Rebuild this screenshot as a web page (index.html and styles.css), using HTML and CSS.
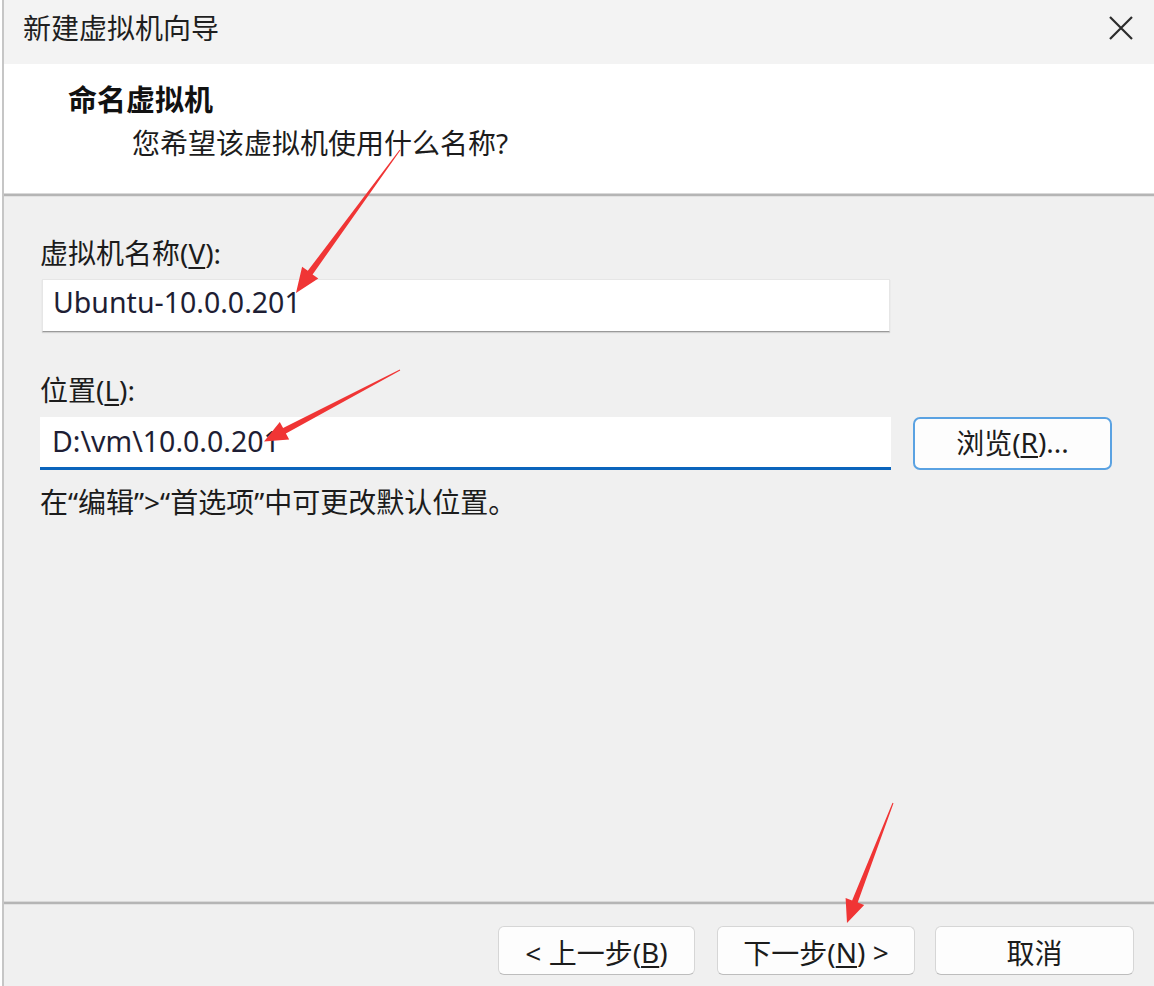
FILE: index.html
```html
<!DOCTYPE html>
<html lang="zh-CN">
<head>
<meta charset="utf-8">
<title>新建虚拟机向导</title>
<link rel="stylesheet" href="styles.css">
</head>
<body>
<div class="window">
  <div class="titlebar">
    <span class="title">新建虚拟机向导</span>
    <span class="close" aria-label="关闭">
      <svg width="26" height="26" viewBox="0 0 26 26"><path d="M2 2 L24 24 M24 2 L2 24" stroke="#2b2b2b" stroke-width="2.2" fill="none"/></svg>
    </span>
  </div>
  <div class="header">
    <div class="heading">命名虚拟机</div>
    <div class="subheading">您希望该虚拟机使用什么名称?</div>
  </div>
  <div class="sep"></div>
  <div class="body">
    <div class="label">虚拟机名称(<u>V</u>):</div>
    <div class="field field-name">Ubuntu-10.0.0.201</div>
    <div class="label label-loc">位置(<u>L</u>):</div>
    <div class="row">
      <div class="field field-loc">D:\vm\10.0.0.201</div>
      <div class="btn btn-browse">浏览(<u>R</u>)...</div>
    </div>
    <div class="hint">在“编辑”&gt;“首选项”中可更改默认位置。</div>
  </div>
  <div class="sep sep-foot"></div>
  <div class="footer">
    <div class="btn btn-foot">&lt; 上一步(<u>B</u>)</div>
    <div class="btn btn-foot btn-next">下一步(<u>N</u>) &gt;</div>
    <div class="btn btn-foot btn-cancel">取消</div>
  </div>
</div>
<svg class="arrows" width="1154" height="986" viewBox="0 0 1154 986">
  <polygon fill="#f03535" points="400.4,150.3 312.6,274.4 318.3,278.5 296,293 302.1,266.7 307.8,270.8 399.6,149.7"/>
  <polygon fill="#f03535" points="400.2,370.4 285.9,433.4 289.2,439.6 264,441.5 279.8,421.9 283.1,428.1 399.8,369.6"/>
  <polygon fill="#f03535" points="893.5,803.2 857.7,902.6 864.2,905.1 847,923 845.6,897.9 852.1,900.4 892.5,802.8"/>
</svg>
</body>
</html>
```
FILE: styles.css
```css
html, body {
  margin: 0;
  padding: 0;
  background: #ffffff;
}
body {
  width: 1154px;
  height: 986px;
  overflow: hidden;
  position: relative;
  font-family: "Noto Sans", "Noto Sans CJK SC", sans-serif;
  font-size: 28px;
  color: #1c1c1c;
}
.window {
  margin-left: 2px;
  border-left: 2px solid #c6c6c6;
  height: 986px;
  display: flex;
  flex-direction: column;
  box-sizing: border-box;
}
.titlebar {
  height: 64px;
  background: #f3f3f3;
  display: flex;
  align-items: center;
  justify-content: space-between;
  padding: 0 20px 8px 19px;
  box-sizing: border-box;
  flex: none;
}
.title {
  font-size: 28px;
  line-height: 36px;
  color: #1f1f1f;
}
.close {
  display: flex;
  width: 26px;
  height: 26px;
}
.header {
  height: 129px;
  background: #ffffff;
  padding: 18px 0 0 64px;
  box-sizing: border-box;
  flex: none;
}
.heading {
  font-weight: 700;
  font-size: 29px;
  line-height: 36px;
  color: #111;
}
.subheading {
  margin-top: 7px;
  margin-left: 64px;
  line-height: 36px;
  color: #1c1c1c;
}
.sep {
  height: 2px;
  background: #b5b5b5;
  border-top: 1px solid #d9d9d9;
  border-bottom: 1px solid #e2e2e2;
  flex: none;
}
.body {
  flex: 1;
  background: #f0f0f0;
  padding: 38px 0 0 36px;
}
.label {
  line-height: 36px;
  color: #1c1c1c;
}
.label-loc {
  margin-top: 40px;
}
.field {
  height: 53px;
  background: #ffffff;
  box-sizing: border-box;
  display: flex;
  align-items: center;
  font-size: 28.5px;
  color: #1e1e34;
}
.field-name {
  margin-top: 8px;
  margin-left: 2px;
  width: 848px;
  padding: 0 0 7px 10px;
  border: 1px solid #e6e6e6;
  border-bottom: 1px solid #9a9a9a;
  box-shadow: 0 1px 1px rgba(0, 0, 0, 0.12);
}
.row {
  margin-top: 9px;
  display: flex;
  align-items: flex-start;
}
.field-loc {
  width: 851px;
  padding: 0 0 3px 12px;
  border-bottom: 3px solid #0a64bc;
}
.btn {
  box-sizing: border-box;
  background: #fdfdfd;
  display: flex;
  align-items: center;
  justify-content: center;
  color: #1c1c1c;
  font-size: 28px;
}
.btn-browse {
  margin-left: 22px;
  width: 199px;
  height: 53px;
  border: 2px solid #5aa2e2;
  border-radius: 7px;
  padding-bottom: 4px;
}
.hint {
  margin-top: 14px;
  line-height: 36px;
}
u {
  text-decoration-thickness: 2px;
  text-underline-offset: 3px;
}
.footer {
  height: 81px;
  background: #f0f0f0;
  display: flex;
  justify-content: flex-end;
  align-items: flex-start;
  padding: 21px 20px 0 0;
  box-sizing: border-box;
  gap: 22px;
  flex: none;
}
.btn-foot {
  width: 197px;
  height: 49px;
  border: 1px solid #d6d6d6;
  border-bottom-color: #bdbdbd;
  border-radius: 6px;
  padding-top: 2px;
}
.btn-next {
  width: 198px;
}
.btn-cancel {
  width: 199px;
  margin-left: -2px;
}
.arrows {
  position: absolute;
  left: 0;
  top: 0;
  pointer-events: none;
}
```
